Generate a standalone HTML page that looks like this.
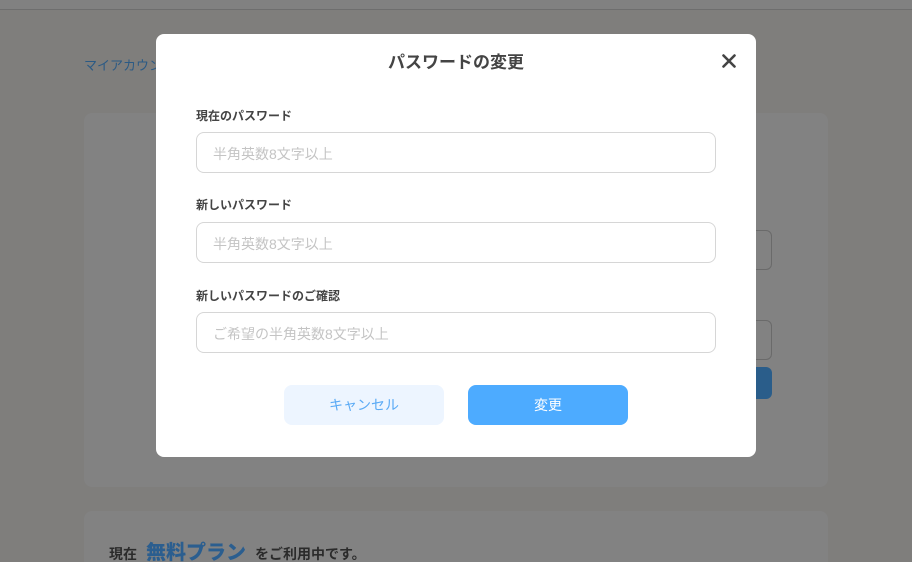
<!DOCTYPE html>
<html style="width:912px;height:562px;overflow:hidden"><head><meta charset="utf-8"><style>
*{box-sizing:border-box;margin:0;padding:0}
body{width:912px;height:562px;overflow:hidden;background:#7f7e7c;font-family:"Liberation Sans","Noto Sans CJK JP",sans-serif;position:relative}
.top{position:absolute;left:0;top:0;width:912px;height:10px;background:#818181;border-bottom:1px solid #6e6e6e}
.crumb{position:absolute;left:84px;top:55px;font-size:13px;color:#2b5a85}
.card{position:absolute;left:84px;width:744px;background:#828282;border-radius:8px}
.bi{position:absolute;left:740px;width:32px;height:40px;border:1px solid #6a6a6a;border-radius:6px;background:#828282}
.bb{position:absolute;left:740px;top:367px;width:32px;height:32px;background:#2a5d8a;border-radius:6px}
.plan{position:absolute;left:109px;top:536px;font-size:14px;color:#2b2b2b;font-weight:bold}
.plan b{color:#2b5e8f;font-size:20px;margin:0 9px}
.modal{position:absolute;left:156px;top:34px;width:600px;height:423px;background:#fff;border-radius:8px}
.title{position:absolute;left:0;width:600px;top:14px;text-align:center;font-size:17px;font-weight:bold;color:#444}
.close{position:absolute;left:566px;top:20px}
.lbl{position:absolute;left:40px;font-size:12px;font-weight:bold;color:#444}
.inp{position:absolute;left:40px;width:520px;height:41px;border:1px solid #d6d6d6;border-radius:8px;font-size:14px;color:#c4c4c4;padding:11px 16px}
.btn{position:absolute;top:351px;width:160px;height:40px;border-radius:8px;text-align:center;line-height:40px;font-size:14px}
</style></head><body>
<div class="top"></div>
<div class="crumb">マイアカウント</div>
<div class="card" style="top:113px;height:374px"></div>
<div class="card" style="top:511px;height:51px;border-radius:8px 8px 0 0"></div>
<div class="bi" style="top:230px"></div>
<div class="bi" style="top:320px"></div>
<div class="bb"></div>
<div class="plan">現在<b>無料プラン</b>をご利用中です。</div>
<div class="modal">
<div class="title">パスワードの変更</div>
<svg class="close" width="14" height="14" viewBox="0 0 14 14"><path d="M1.5 1.5L12.5 12.5M12.5 1.5L1.5 12.5" stroke="#444" stroke-width="2.6" stroke-linecap="round"/></svg>
<div class="lbl" style="top:73px">現在のパスワード</div>
<div class="inp" style="top:98px">半角英数8文字以上</div>
<div class="lbl" style="top:162px">新しいパスワード</div>
<div class="inp" style="top:188px">半角英数8文字以上</div>
<div class="lbl" style="top:253px">新しいパスワードのご確認</div>
<div class="inp" style="top:278px">ご希望の半角英数8文字以上</div>
<div class="btn" style="left:128px;background:#edf5ff;color:#5aaaf5">キャンセル</div>
<div class="btn" style="left:312px;background:#4dabff;color:#fff">変更</div>
</div>
</body></html>
